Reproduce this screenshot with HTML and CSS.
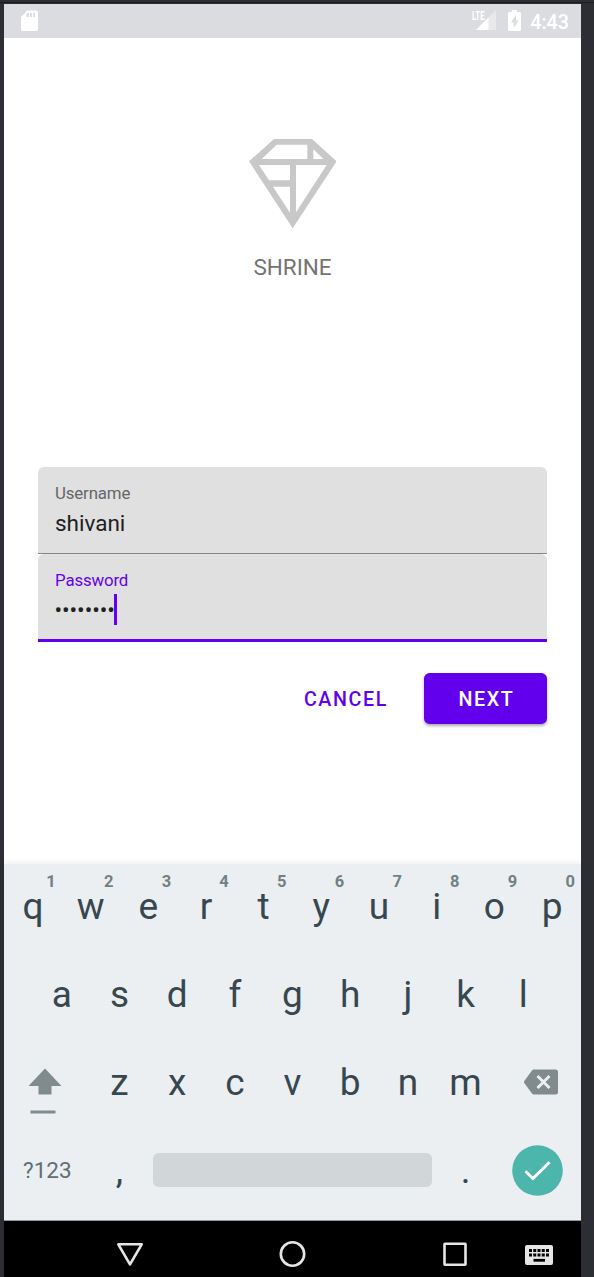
FILE: index.html
```html
<!DOCTYPE html>
<html lang="en">
<head>
<meta charset="utf-8">
<title>Shrine</title>
<link rel="stylesheet" href="styles.css">
</head>
<body>
<div class="phone">
  <header class="status">
    <svg class="sd" width="17" height="21" viewBox="0 0 17 21"><path fill="#fff" d="M6.500 .5H15a2 2 0 0 1 2 2v16.500a2 2 0 0 1-2 2H2a2 2 0 0 1-2-2V7z"/><path fill="#dcdde1" d="M5.500 3H8v4H5.500zM9 3h2v4H9zM12 3h2v4h-2z"/></svg>
    <div class="signal">
      <span class="lte">LTE</span>
      <svg width="20" height="21" viewBox="0 0 20 21"><path fill="#e9e9ec" d="M20 0v20H0z"/><path fill="#fff" d="M12.500 7.500V20H0z"/></svg>
    </div>
    <svg class="battery" width="13" height="21" viewBox="0 0 13 21"><path fill="#fff" fill-rule="evenodd" d="M4 0h5v2h2.500A1.500 1.500 0 0 1 13 3.500v16a1.500 1.500 0 0 1-1.500 1.500h-10A1.500 1.500 0 0 1 0 19.500v-16A1.500 1.500 0 0 1 1.500 2H4zM8 5l-5 7.500h2.800V18l4.700-7.500H8z"/></svg>
    <span class="clock">4:43</span>
  </header>

  <main class="login">
    <div class="brand">
      <svg class="logo" viewBox="50 42 263 268"><path fill="#c8c8c8" fill-rule="evenodd" d="M125 42H239L313 109 181 310 50 109zM133 59 88 102H225V59zM243 73V102H273zM80 120 110 166H173V120zM122 185 173 263V185zM191 120V262L283 120z"/></svg>
      <h1 class="name">SHRINE</h1>
    </div>
    <form class="form">
      <div class="field">
        <span class="label">Username</span>
        <span class="value">shivani</span>
      </div>
      <div class="field focused">
        <span class="label">Password</span>
        <span class="value"><span class="dots">••••••••</span><i class="caret"></i></span>
      </div>
      <div class="actions">
        <button type="button" class="btn">CANCEL</button>
        <button type="button" class="btn primary">NEXT</button>
      </div>
    </form>
  </main>

  <section class="keyboard">
    <div class="row">
      <span class="key">q<sup>1</sup></span><span class="key">w<sup>2</sup></span><span class="key">e<sup>3</sup></span><span class="key">r<sup>4</sup></span><span class="key">t<sup>5</sup></span><span class="key">y<sup>6</sup></span><span class="key">u<sup>7</sup></span><span class="key">i<sup>8</sup></span><span class="key">o<sup>9</sup></span><span class="key">p<sup>0</sup></span>
    </div>
    <div class="row">
      <span class="key">a</span><span class="key">s</span><span class="key">d</span><span class="key">f</span><span class="key">g</span><span class="key">h</span><span class="key">j</span><span class="key">k</span><span class="key">l</span>
    </div>
    <div class="row">
      <span class="key wide shift"><svg width="34" height="46" viewBox="0 0 34 46"><path fill="#808b8e" d="M17 .5 33.500 18H23.500v8.500h-13V18H.5zM2.500 42.500h25v3h-25z"/></svg></span>
      <span class="key">z</span><span class="key">x</span><span class="key">c</span><span class="key">v</span><span class="key">b</span><span class="key">n</span><span class="key">m</span>
      <span class="key wide erase"><svg width="34" height="26" viewBox="0 0 34 26"><path fill="#808b8e" d="M10 .5H31.500a2.500 2.500 0 0 1 2.500 2.500V23a2.500 2.500 0 0 1-2.500 2.500H10a2.500 2.500 0 0 1-2-1L.3 14a1.500 1.500 0 0 1 0-2L8 1.500a2.500 2.500 0 0 1 2-1z"/><path stroke="#ebeff2" stroke-width="2.900" d="m13.500 7 12 12m0-12-12 12"/></svg></span>
    </div>
    <div class="row bottom">
      <span class="key wide symbols">?123</span>
      <span class="key punct">,</span>
      <span class="space"></span>
      <span class="key punct">.</span>
      <span class="key wide enter"><svg width="51" height="51" viewBox="0 0 51 51"><circle cx="25.500" cy="25.500" r="25.300" fill="#4db6ac"/><path fill="none" stroke="#fff" stroke-width="2.900" d="m13.500 26.300 7.500 7.200 16.500-16.300"/></svg></span>
    </div>
  </section>

  <nav class="nav">
    <svg width="577" height="56" viewBox="0 0 577 56" fill="none" stroke="#e6e6e6" stroke-width="2.600" stroke-linejoin="round">
      <path d="M114.300 23.300h23.400L126 43.300z"/>
      <circle cx="288.500" cy="33" r="11.700"/>
      <rect x="440.500" y="22.800" width="21" height="21" rx=".5"/>
      <rect x="521" y="24" width="28" height="20" rx="2" fill="#e6e6e6" stroke="none"/>
      <path stroke="#000" stroke-width="3" stroke-dasharray="3 1.250" d="M525 29.500h20.300M525 33.900h20.300"/>
      <path stroke="#000" stroke-width="2.800" d="M529.500 39.300h11.500"/>
    </svg>
  </nav>
</div>
</body>
</html>
```
FILE: styles.css
```css
* { box-sizing: border-box; }

body {
  margin: 0;
  height: 1277px;
  padding: 4px 13px 0 4px;
  overflow: hidden;
  background: linear-gradient(#2d2e33 2px, #1b1c20 2px, #1b1c20 3px, #2d2e33 3px);
  font-family: Roboto, sans-serif;
}

.phone {
  display: flex;
  flex-direction: column;
  width: 577px;
  height: 1273px;
  background: #fff;
}

.status {
  display: flex;
  align-items: flex-start;
  height: 34px;
  padding: 6px 12px 0 17px;
  background: #dbdce0;
  color: #fff;
}

.signal {
  position: relative;
  height: 21px;
  margin-left: auto;
  margin-right: 12px;
}

.lte {
  position: absolute;
  left: -4px;
  top: 0;
  font: 700 12.500px/12px Roboto, sans-serif;
  transform: scaleX(.62);
  transform-origin: left;
}

.clock {
  margin-left: 9px;
  font-size: 19.700px;
  font-weight: 500;
  line-height: 25px;
}

.login {
  display: flex;
  flex-direction: column;
  height: 826px;
  padding: 101px 34px 0;
}

.brand {
  display: flex;
  flex-direction: column;
  align-items: center;
  height: 328px;
}

.logo { width: 87.700px; height: 89.300px; }

.name {
  margin: 25.700px 0 0;
  color: #737373;
  font-size: 22.500px;
  font-weight: 400;
  line-height: 26px;
}

.field {
  display: flex;
  flex-direction: column;
  height: 87px;
  padding: 16px 17px 0;
  border-bottom: 1.400px solid #868686;
  border-radius: 6px 6px 0 0;
  background: #e0e0e0;
}

.label {
  color: #666;
  font-size: 16.850px;
  letter-spacing: -.15px;
  line-height: 21px;
}

.value {
  display: flex;
  align-items: center;
  height: 38px;
  color: #202020;
  font-size: 22.500px;
}

.focused {
  height: 88px;
  border-bottom: 3px solid #6200ee;
}

.focused .label { color: #6200ee; }

.dots {
  margin-left: -.5px;
  letter-spacing: -.05px;
}

.caret {
  width: 3px;
  height: 31px;
  margin: 0 0 2px -1px;
  background: #6200ee;
}

.actions {
  display: flex;
  justify-content: flex-end;
  gap: 15px;
  padding-top: 31px;
}

.btn {
  height: 51px;
  padding: 2px 21px 0 23px;
  border: 0;
  border-radius: 5.600px;
  background: none;
  color: #6200ee;
  font: 500 19.700px/49px Roboto, sans-serif;
  letter-spacing: 1.600px;
}

.primary {
  width: 123px;
  background: #6200ee;
  color: #fff;
  box-shadow: 0 2px 3px rgba(0, 0, 0, .32);
}

.keyboard {
  display: flex;
  flex-direction: column;
  gap: 6px;
  height: 357px;
  padding-top: 1px;
  border-bottom: 1px solid #90999c;
  background: #ebeff2;
  box-shadow: 0 -2px 5px rgba(0, 0, 0, .06);
  color: #37474f;
}

.row {
  display: flex;
  justify-content: center;
  height: 82px;
}

.key {
  position: relative;
  display: flex;
  align-items: center;
  justify-content: center;
  width: 57.700px;
  font-size: 37px;
}

.key sup {
  position: absolute;
  right: 6px;
  top: 7px;
  color: #737f83;
  font-size: 16.500px;
  font-weight: 700;
  line-height: 20px;
}

.wide { width: 86.550px; }
.shift { padding: 18px 5px 0 0; }
.erase { padding-left: 7px; }
.enter { padding: 2px 0 0; }
.bottom { height: 81px; }
.punct { padding-top: 2px; }

.symbols {
  color: #5f6e73;
  font-size: 22.500px;
}

.space {
  align-self: center;
  width: 279px;
  height: 34px;
  margin: 0 4.750px;
  border-radius: 5.600px;
  background: #d1d6d9;
}

.nav {
  height: 56px;
  background: #000;
}
```
